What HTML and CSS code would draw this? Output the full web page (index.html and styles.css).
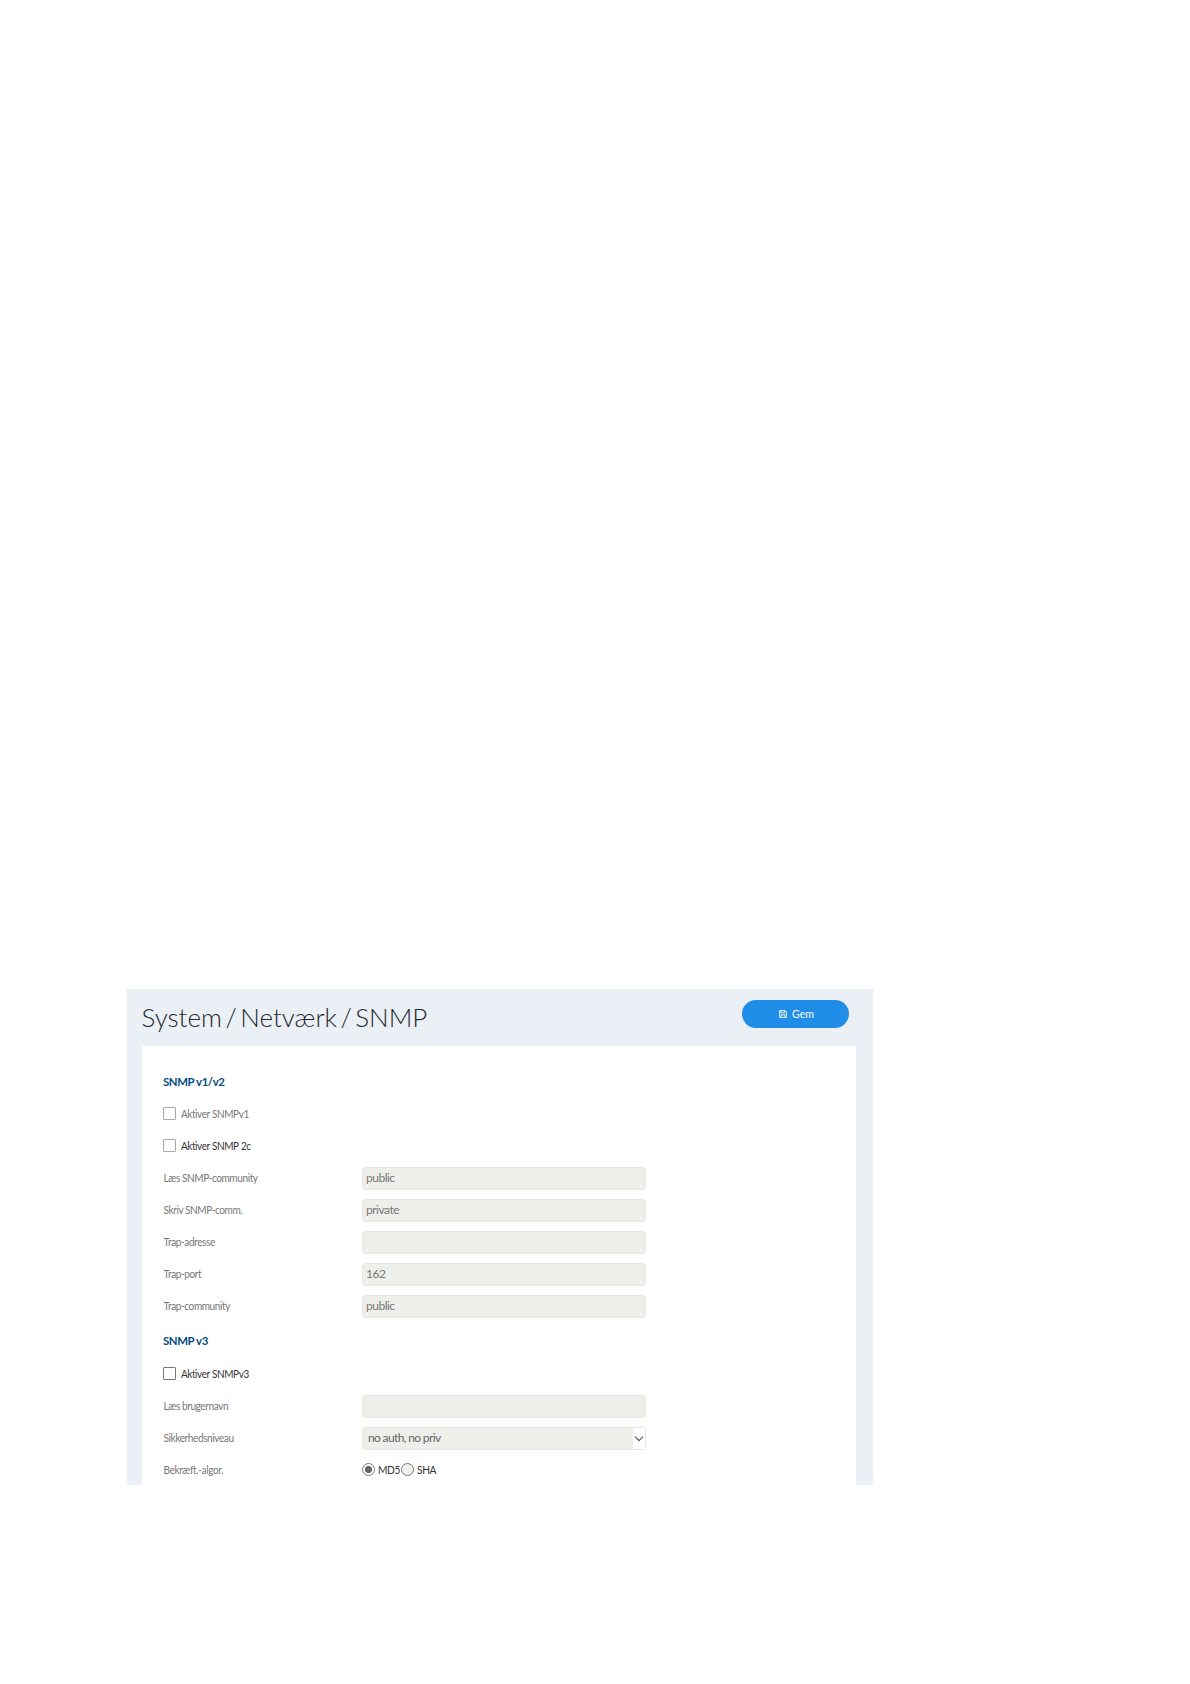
FILE: index.html
```html
<!DOCTYPE html>
<html lang="da">
<head>
<meta charset="utf-8">
<title>System / Netværk / SNMP</title>
<link rel="stylesheet" href="styles.css">
</head>
<body>
<main class="panel">
  <header class="header">
    <h1 class="title">System / Netværk / SNMP</h1>
    <button class="save" type="button">
      <svg class="save-icon" viewBox="0 0 8 8" width="8" height="8"><path d="M.6.6h5.5l1.3 1.3v5.5H.6zM2 .8v2h3.5v-2M2 7.3V4.8h4v2.5" fill="none" stroke="currentColor" stroke-width=".9"/></svg>
      <span>Gem</span>
    </button>
  </header>
  <form class="card">
    <h2 class="heading">SNMP v1/v2</h2>
    <label class="row muted"><i class="check"></i><span class="caption">Aktiver SNMPv1</span></label>
    <label class="row"><i class="check"></i><span class="caption">Aktiver SNMP 2c</span></label>
    <div class="row muted"><div class="label">Læs SNMP-community</div><div class="field">public</div></div>
    <div class="row muted"><div class="label">Skriv SNMP-comm.</div><div class="field">private</div></div>
    <div class="row muted"><div class="label">Trap-adresse</div><div class="field"></div></div>
    <div class="row muted"><div class="label">Trap-port</div><div class="field">162</div></div>
    <div class="row muted"><div class="label">Trap-community</div><div class="field">public</div></div>
    <h2 class="heading second">SNMP v3</h2>
    <label class="row"><i class="check dark"></i><span class="caption">Aktiver SNMPv3</span></label>
    <div class="row muted"><div class="label">Læs brugernavn</div><div class="field"></div></div>
    <div class="row muted"><div class="label">Sikkerhedsniveau</div><div class="field select"><span>no auth, no priv</span><b class="arrow"><svg viewBox="0 0 10 6" width="10" height="6"><path d="M1 .7l4 4 4-4" fill="none" stroke="#555" stroke-width="1.2"/></svg></b></div></div>
    <div class="row muted"><div class="label">Bekræft.-algor.</div><div class="radios"><i class="radio on"></i><span class="option">MD5</span><i class="radio"></i><span class="option">SHA</span></div></div>
  </form>
</main>
</body>
</html>
```
FILE: styles.css
```css
* { box-sizing: border-box; }
body { margin: 0; background: #fff; font: 11px Lato, "Liberation Sans", sans-serif; color: #333; }
.panel { margin: 989px 0 0 127px; width: 746px; height: 496px; padding: 0 17px 0 15px; background: #ebeff6; overflow: hidden; }
.header { display: flex; height: 57px; justify-content: space-between; padding: 11px 7px 0 0; align-items: flex-start; }
.title { margin: 0 0 0 -.5px; font-size: 26px; line-height: 34px; font-weight: 300; word-spacing: -3.6px; white-space: nowrap; color: #26282c; }
.save { display: flex; align-items: center; justify-content: center; gap: 5px; width: 107px; height: 28px; border: 0; border-radius: 14px; background: #208ee8; color: #fff; font: 10.5px Lato, sans-serif; padding: 0 0 0 2px; }
.card { height: 439px; padding: 20px 22px 0; background: #fff; }
.heading { display: flex; align-items: center; height: 32px; margin: 0 0 0 -.8px; padding-bottom: 2px; font-size: 12px; font-weight: 700; letter-spacing: -.45px; word-spacing: .2px; color: #064a82; transform: scaleX(.95); transform-origin: left; }
.second { height: 36px; padding: 1px 0 0; }
.row { display: flex; align-items: center; height: 32px; white-space: nowrap; letter-spacing: -.45px; word-spacing: -.2px; }
.muted { color: #777; }
.check { width: 13px; height: 13px; margin: -1px 5px 0 -1px; border: 1px solid #aaa; border-radius: 1px; background: #fff; }
.dark { border-color: #777; }
.caption { margin-top: -1px; word-spacing: .4px; transform: scaleX(.905); transform-origin: left; }
.label { width: 199px; margin: -1px 0 0 -1px; padding-left: .6px; transform: scaleX(.915); transform-origin: left; }
.field { display: flex; align-items: center; width: 284px; height: 23px; margin-top: 1px; padding: 0 0 2px 3px; border: 1px solid #e6e7e4; border-radius: 3px; background: #eeeeea; font-size: 12px; letter-spacing: -.5px; color: #777; }
.select { padding-left: 5px; letter-spacing: -.6px; color: #666; }
.arrow { display: flex; align-items: center; justify-content: center; width: 12px; height: 21px; margin: 2px 0 0 auto; background: #fff; }
.radios { display: flex; align-items: center; margin-top: -1px; color: #333; }
.radio { width: 13px; height: 13px; border: 1px solid #777; border-radius: 50%; background: #f1f1ee; margin-right: 3px; }
.option { width: 23px; transform: scaleX(.93); transform-origin: left; }
.on { background: radial-gradient(circle, #666 0 3.2px, #fff 4px); }
```
